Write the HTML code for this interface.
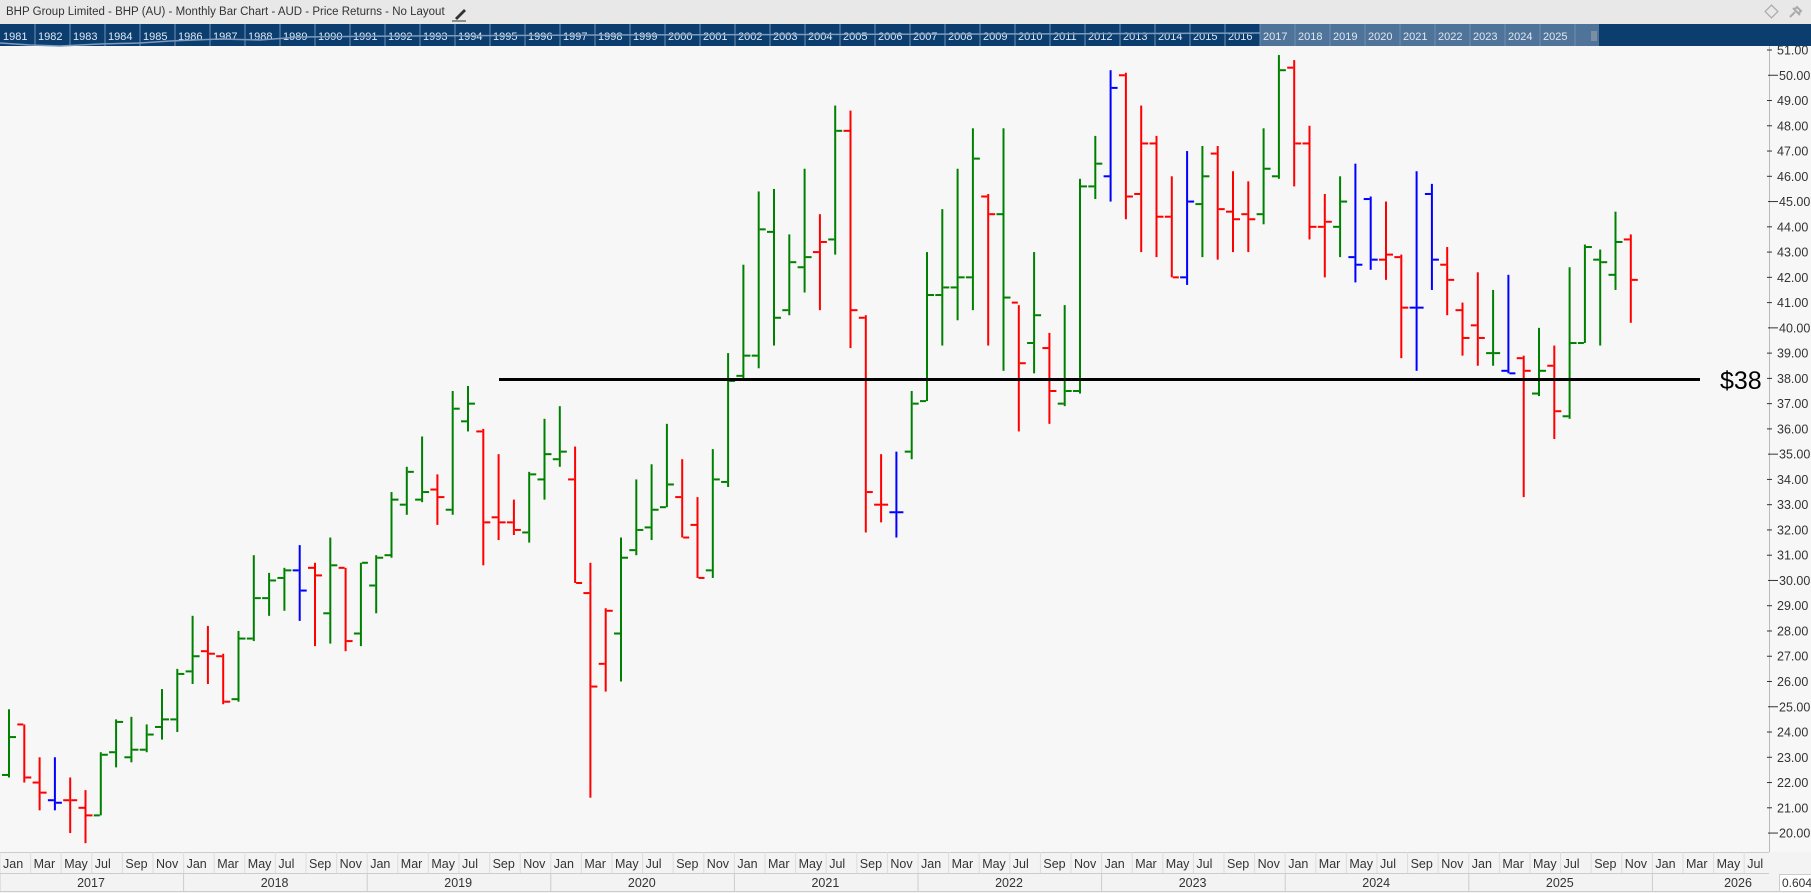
<!DOCTYPE html>
<html><head><meta charset="utf-8">
<style>
body{margin:0;width:1811px;height:893px;overflow:hidden;background:#f7f7f7;font-family:"Liberation Sans",sans-serif;}
#title{position:absolute;left:0;top:0;width:1811px;height:24px;background:#e8e8e8;font-size:11.5px;color:#333;line-height:24px;}
#title span{position:absolute;left:6px;}
#years{position:absolute;left:0;top:24px;width:1811px;height:22px;background:#0b3d6f;}
svg{position:absolute;left:0;top:0;}
</style></head><body>
<div id="title"><span>BHP Group Limited - BHP (AU) - Monthly Bar Chart - AUD - Price Returns - No Layout</span></div>
<div id="years"></div>
<svg id="s" width="1811" height="893" xmlns="http://www.w3.org/2000/svg"></svg>
<script>
var d=[
"G 22.3 24.9 22.2 23.8","R 24.3 24.3 22.0 22.2","R 22.0 23.0 20.9 21.6","B 21.3 23.0 20.9 21.2","R 21.3 22.2 20.0 21.3","R 21.0 21.7 19.6 20.7","G 20.7 23.2 20.7 23.1","G 23.2 24.5 22.6 24.4","G 23.0 24.6 22.8 23.3","G 23.3 24.3 23.2 23.9","G 24.2 25.7 23.7 24.5","G 24.5 26.5 24.0 26.3",
"G 26.4 28.6 25.9 27.0","R 27.2 28.2 25.9 27.1","R 27.0 27.1 25.1 25.2","G 25.3 28.0 25.2 27.7","G 27.7 31.0 27.6 29.3","G 29.3 30.3 28.6 30.0","G 30.1 30.5 28.8 30.4","B 30.4 31.4 28.4 29.6","R 30.5 30.7 27.4 30.2","G 28.7 31.7 27.5 30.6","R 30.5 30.5 27.2 27.6","G 27.9 30.7 27.4 30.7",
"G 29.8 31.0 28.7 30.9","G 31.0 33.5 30.9 33.2","G 33.0 34.5 32.6 34.3","G 33.2 35.7 33.1 33.5","R 33.6 34.2 32.2 33.3","G 32.8 37.5 32.6 36.8","G 36.3 37.7 35.9 37.0","R 35.9 36.0 30.6 32.3","R 32.5 35.0 31.6 32.3","R 32.3 33.2 31.8 32.0","G 31.9 34.3 31.5 34.2","G 34.0 36.4 33.2 35.0",
"G 34.8 36.9 34.5 35.1","R 34.0 35.3 29.9 29.9","R 29.5 30.7 21.4 25.8","R 26.7 28.9 25.6 28.8","G 27.9 31.7 26.0 30.9","G 31.2 34.0 31.0 32.0","G 32.1 34.6 31.6 32.8","G 32.9 36.2 32.9 33.8","R 33.3 34.8 31.7 31.7","R 32.2 33.3 30.1 30.1","G 30.4 35.2 30.1 34.0","G 33.9 39.0 33.7 37.9",
"G 38.1 42.5 37.9 38.9","G 38.9 45.4 38.4 43.9","G 43.8 45.5 39.3 40.4","G 40.7 43.7 40.5 42.6","G 42.4 46.3 41.4 42.8","R 43.0 44.5 40.7 43.4","G 43.5 48.8 42.9 47.8","R 47.8 48.6 39.2 40.7","R 40.4 40.5 31.9 33.5","R 33.0 35.0 32.3 33.0","B 32.7 35.1 31.7 32.7","G 35.1 37.5 34.8 37.0",
"G 37.1 43.0 37.1 41.3","G 41.3 44.7 39.3 41.6","G 41.6 46.3 40.3 42.0","G 42.0 47.9 40.7 46.7","R 45.2 45.3 39.3 44.5","G 44.5 47.9 38.3 41.2","R 41.0 40.9 35.9 38.6","G 39.4 43.0 38.2 40.5","R 39.2 39.8 36.2 37.5","G 37.0 40.9 36.9 37.5","G 37.5 45.9 37.4 45.6","G 45.6 47.6 45.1 46.5",
"B 46.0 50.2 45.0 49.5","R 50.0 50.1 44.3 45.2","R 45.3 48.8 43.0 47.3","R 47.3 47.6 42.8 44.4","R 44.4 46.0 42.0 42.0","B 42.0 47.0 41.7 45.0","G 44.9 47.2 42.8 46.0","R 46.9 47.2 42.7 44.7","R 44.6 46.2 43.0 44.3","R 44.5 45.8 43.0 44.3","G 44.5 47.9 44.1 46.3","G 46.0 50.8 45.9 50.2",
"R 50.3 50.6 45.6 47.3","R 47.3 48.0 43.5 44.0","R 44.0 45.3 42.0 44.2","G 44.0 46.0 42.8 45.0","B 42.8 46.5 41.8 42.5","B 45.1 45.2 42.3 42.7","R 42.7 45.0 41.9 42.9","R 42.8 42.9 38.8 40.8","B 40.8 46.2 38.3 40.8","B 45.3 45.7 41.5 42.7","R 42.5 43.2 40.5 41.9","R 40.7 41.0 38.9 39.6",
"R 40.1 42.2 38.5 39.6","G 39.0 41.5 38.5 39.0","B 38.3 42.1 38.2 38.2","R 38.8 38.9 33.3 38.3","G 37.4 40.0 37.3 38.3","R 38.5 39.3 35.6 36.7","G 36.5 42.4 36.4 39.4","G 39.4 43.3 39.4 43.2","G 42.7 43.1 39.3 42.6","G 42.1 44.6 41.5 43.4","R 43.5 43.7 40.2 41.9"];
var col={G:"#008000",R:"#ff0000",B:"#0000ff"};
function Y(p){return 50+(51-p)*25.26;}
var h='';
h+='<rect x="1260" y="24" width="339" height="22" fill="#4f7399"/>';
for(var i=0;i<45;i++){var x=i*35;h+='<line x1="'+(x+35)+'" y1="24" x2="'+(x+35)+'" y2="46" stroke="#6f8fb3" stroke-width="1"/>';h+='<text x="'+(x+3)+'" y="40" font-size="11" fill="#dfe8f2" font-family="Liberation Sans">'+(1981+i)+'</text>';}
h+='<polyline points="0,43 30,45 60,46 100,44 140,43 170,41 220,39 260,40 300,37 400,36 600,35 1000,34 1260,33" fill="none" stroke="#7d9bbd" stroke-width="1.5"/>';
h+='<line x1="1592" y1="31" x2="1592" y2="41" stroke="#aaa"/><line x1="1594" y1="31" x2="1594" y2="41" stroke="#aaa"/><line x1="1596" y1="31" x2="1596" y2="41" stroke="#aaa"/>';
h+='<path d="M455 18 L464 9 L466 11 L457 20 Z" fill="#333"/><line x1="452" y1="21" x2="466" y2="21" stroke="#333"/>';
h+='<rect x="1767" y="7" width="9" height="9" fill="none" stroke="#aaa" stroke-width="1.2" transform="rotate(45 1771.5 11.5)"/>';
h+='<path d="M1790 17 L1795 12 M1793 8 L1800 15 M1794 10 L1797 7 L1801 11 L1798 14" stroke="#aaa" stroke-width="2" fill="none"/>';
for(var i=0;i<d.length;i++){var a=d[i].split(' '),c=col[a[0]],o=+a[1],hi=+a[2],lo=+a[3],cl=+a[4];var x=9+i*15.3;
h+='<rect x="'+(x-1)+'" y="'+Y(hi)+'" width="2" height="'+(Y(lo)-Y(hi))+'" fill="'+c+'"/>';
h+='<rect x="'+(x-7)+'" y="'+(Y(o)-1)+'" width="6" height="2" fill="'+c+'"/>';
h+='<rect x="'+(x+1)+'" y="'+(Y(cl)-1)+'" width="6" height="2" fill="'+c+'"/>';}
h+='<rect x="499" y="378" width="1201" height="3" fill="#000"/>';
h+='<text x="1720" y="389" font-size="25" fill="#000" font-family="Liberation Sans">$38</text>';
h+='<line x1="1769.5" y1="46" x2="1769.5" y2="852" stroke="#bbb"/>';
for(var p=20;p<=51;p++){var y=Y(p);var mj=(p%5==0);h+='<line x1="'+(mj?1768:1767)+'" y1="'+y+'" x2="'+(mj?1778:1772)+'" y2="'+y+'" stroke="#333"/>';h+='<text x="'+(mj?1779:1777)+'" y="'+(y+4.5)+'" font-size="12.5" fill="#333" font-family="Liberation Sans">'+p+'.00</text>';}
h+='<rect x="0" y="852" width="1811" height="41" fill="#f3f3f3"/>';
h+='<line x1="0" y1="852.5" x2="1769" y2="852.5" stroke="#ccc"/><line x1="0" y1="873.5" x2="1769" y2="873.5" stroke="#ccc"/><line x1="0" y1="891.5" x2="1811" y2="891.5" stroke="#ccc"/>';
var mn=["Jan","Mar","May","Jul","Sep","Nov"];
for(var k=0;k<58;k++){var x=1+k*30.6;if(x>1765)break;h+='<line x1="'+(x-1)+'" y1="852" x2="'+(x-1)+'" y2="873" stroke="#ddd"/>';h+='<text x="'+(x+2)+'" y="868" font-size="12.5" fill="#333" font-family="Liberation Sans">'+mn[k%6]+'</text>';}
for(var yy=0;yy<10;yy++){var x=yy*183.6;h+='<line x1="'+x+'" y1="873" x2="'+x+'" y2="891" stroke="#ccc"/>';var tx=Math.min(x+91,1738);h+='<text x="'+tx+'" y="887" font-size="12.5" fill="#333" text-anchor="middle" font-family="Liberation Sans">'+(2017+yy)+'</text>';}
h+='<rect x="1779.5" y="874.5" width="40" height="17" fill="#fff" stroke="#ccc"/><text x="1782" y="887" font-size="12" fill="#333" font-family="Liberation Sans">0.6047</text>';
document.getElementById('s').innerHTML=h;
</script>
</body></html>
